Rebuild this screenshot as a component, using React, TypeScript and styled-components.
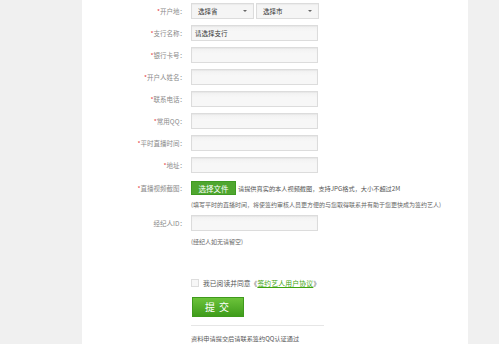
import React from "react";
import styled, { createGlobalStyle } from "styled-components";

const Global = createGlobalStyle`
  html, body { margin: 0; padding: 0; background: #f0f0f0; }
  body { font-family: "Noto Sans CJK SC", "Noto Sans", sans-serif; }
`;

const Page = styled.div`
  width: 499px;
  height: 344px;
  overflow: hidden;
  background: #f0f0f0;
`;

const Panel = styled.div`
  margin-left: 82px;
  width: 386px;
  height: 344px;
  background: #fff;
  padding-top: 3px;
  box-sizing: border-box;
`;

const Row = styled.div<{ $mt?: number }>`
  display: flex;
  align-items: center;
  height: 16px;
  margin-top: ${(p) => p.$mt ?? 0}px;
`;

const Label = styled.div`
  width: 104px;
  flex: none;
  text-align: right;
  font-size: 6.5px;
  color: #8a8a8a;
  padding-right: 5px;
  box-sizing: content-box;
  white-space: nowrap;
  line-height: 16px;
`;

const Star = styled.span`
  color: #e4393c;
`;

const Input = styled.div<{ $w?: number }>`
  width: ${(p) => p.$w ?? 127}px;
  height: 16px;
  box-sizing: border-box;
  border: 1px solid #dcdcdc;
  background: linear-gradient(#f1f1f1, #f7f7f7 40%);
  box-shadow: inset 0 1px 1px rgba(0, 0, 0, 0.04);
  font-size: 6.5px;
  color: #333;
  display: flex;
  align-items: center;
  padding-left: 3px;
`;

const Select = styled(Input)`
  justify-content: space-between;
  padding: 0 6px 0 6px;
  margin-right: 2px;
  background: #f5f5f5;
`;

const Caret = styled.span`
  width: 0;
  height: 0;
  border-left: 2.5px solid transparent;
  border-right: 2.5px solid transparent;
  border-top: 2.5px solid #666;
`;

const FileButton = styled.div`
  width: 45px;
  height: 14px;
  box-sizing: border-box;
  background: #4fa62f;
  border: 1px solid #3f9a22;
  color: #fff;
  font-size: 7.5px;
  display: flex;
  align-items: center;
  justify-content: center;
  margin-right: 2px;
`;

const Hint = styled.div`
  font-size: 6.2px;
  color: #555;
  white-space: nowrap;
`;

const Note = styled.div<{ $mt: number }>`
  margin-top: ${(p) => p.$mt}px;
  margin-left: 109px;
  font-size: 6px;
  color: #666;
  height: 10px;
  line-height: 10px;
  white-space: nowrap;
`;

const AgreeRow = styled.div`
  margin-top: 31px;
  margin-left: 109px;
  display: flex;
  align-items: center;
  height: 10px;
  font-size: 6.8px;
  color: #555;
`;

const Check = styled.span`
  width: 8px;
  height: 8px;
  box-sizing: border-box;
  border: 1px solid #ddd;
  background: #f7f7f7;
  margin-right: 4px;
`;

const Link = styled.a`
  color: #3ea50f;
  text-decoration: underline;
  letter-spacing: 0.2px;
`;

const Submit = styled.div`
  margin-top: 9px;
  margin-left: 110px;
  width: 52px;
  height: 20px;
  box-sizing: border-box;
  border: 1px solid #3f9a1c;
  background: linear-gradient(#6cc33a, #3f9c1b);
  color: #fff;
  font-size: 10px;
  letter-spacing: 4px;
  padding-left: 12px;
  line-height: 18px;
`;

const Divider = styled.div`
  margin-top: 8px;
  margin-left: 109px;
  width: 133px;
  height: 1px;
  background: #e6e6e6;
`;

const Footer = styled.div`
  margin-top: 8px;
  margin-left: 109px;
  font-size: 6.2px;
  color: #555;
  height: 10px;
  line-height: 10px;
  white-space: nowrap;
`;

const fields = ["支行名称", "银行卡号", "开户人姓名", "联系电话", "常用QQ", "平时直播时间", "地址"];

export default function App() {
  return (
    <Page>
      <Global />
      <Panel>
        <Row>
          <Label>
            <Star>*</Star>开户地：
          </Label>
          <Select $w={63}>
            选择省<Caret />
          </Select>
          <Select $w={63}>
            选择市<Caret />
          </Select>
        </Row>
        {fields.map((f, i) => (
          <Row key={f} $mt={6}>
            <Label>
              <Star>*</Star>
              {f}：
            </Label>
            <Input>{i === 0 ? "请选择支行" : ""}</Input>
          </Row>
        ))}
        <Row $mt={7}>
          <Label>
            <Star>*</Star>直播视频截图：
          </Label>
          <FileButton>选择文件</FileButton>
          <Hint>请提供真实的本人视频截图，支持JPG格式，大小不超过2M</Hint>
        </Row>
        <Note $mt={4}>(填写平时的直播时间，将使签约审核人员更方便的与您取得联系并有助于您更快成为签约艺人)</Note>
        <Row $mt={5}>
          <Label>经纪人ID：</Label>
          <Input />
        </Row>
        <Note $mt={6}>(经纪人如无请留空)</Note>
        <AgreeRow>
          <Check />
          我已阅读并同意《<Link>签约艺人用户协议</Link>》
        </AgreeRow>
        <Submit>提交</Submit>
        <Divider />
        <Footer>资料申请提交后请联系签约QQ认证通过</Footer>
      </Panel>
    </Page>
  );
}
